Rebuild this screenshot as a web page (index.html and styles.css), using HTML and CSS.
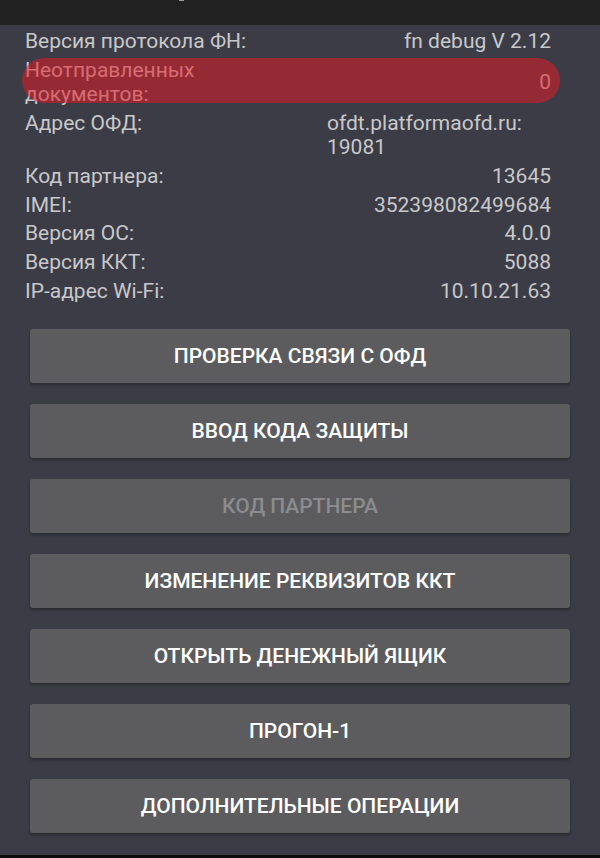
FILE: index.html
```html
<!DOCTYPE html>
<html lang="ru">
<head>
<meta charset="utf-8">
<title>Информация о ККТ</title>
<link rel="stylesheet" href="styles.css">
</head>
<body>
<div class="screen">
  <header class="topbar"><span class="topbar-mark"></span></header>
  <main class="content">
    <section class="info">
      <div class="row">
        <span class="label">Версия протокола ФН:</span>
        <span class="value">fn debug V 2.12</span>
      </div>
      <div class="row row-center">
        <span class="label">Неотправленных документов:</span>
        <span class="value">0</span>
      </div>
      <div class="row">
        <span class="label">Адрес ОФД:</span>
        <span class="value value-start">ofdt.platformaofd.ru: 19081</span>
      </div>
      <div class="row">
        <span class="label">Код партнера:</span>
        <span class="value">13645</span>
      </div>
      <div class="row">
        <span class="label">IMEI:</span>
        <span class="value">352398082499684</span>
      </div>
      <div class="row">
        <span class="label">Версия ОС:</span>
        <span class="value">4.0.0</span>
      </div>
      <div class="row">
        <span class="label">Версия ККТ:</span>
        <span class="value">5088</span>
      </div>
      <div class="row">
        <span class="label">IP-адрес Wi-Fi:</span>
        <span class="value">10.10.21.63</span>
      </div>
      <div class="highlight"></div>
    </section>
    <nav class="actions">
      <button class="btn">Проверка связи с ОФД</button>
      <button class="btn">Ввод кода защиты</button>
      <button class="btn" disabled>Код партнера</button>
      <button class="btn">Изменение реквизитов ККТ</button>
      <button class="btn">Открыть денежный ящик</button>
      <button class="btn">Прогон-1</button>
      <button class="btn">Дополнительные операции</button>
    </nav>
  </main>
  <footer class="bottombar"></footer>
</div>
</body>
</html>
```

FILE: styles.css
```css
* {
  box-sizing: border-box;
}

html, body {
  margin: 0;
  padding: 0;
  background: #0d0d0f;
}

body {
  font-family: Roboto, "Noto Sans", "Liberation Sans", sans-serif;
  width: 600px;
  height: 858px;
  overflow: hidden;
}

.screen {
  display: flex;
  flex-direction: column;
  height: 858px;
}

.topbar {
  height: 25px;
  flex: 0 0 25px;
  background: #212121;
  padding-left: 179px;
}

.topbar-mark {
  display: block;
  width: 5px;
  height: 1px;
  background: #9a9a9a;
}

.content {
  flex: 1 1 auto;
  background: #3c3c46;
  display: flex;
  flex-direction: column;
  padding-top: 4px;
}

.info {
  position: relative;
  display: flex;
  flex-direction: column;
  gap: 4.5px;
  padding: 0 49px 0 25px;
  font-size: 21px;
  line-height: 24.25px;
  color: #c8c8ca;
}

.row {
  display: grid;
  grid-template-columns: 1fr 224px;
  align-items: start;
}

.row-center {
  align-items: center;
}

.label {
  max-width: 260px;
}

.value {
  text-align: right;
}

.value-start {
  text-align: left;
}

.highlight {
  position: absolute;
  left: 22px;
  top: 29px;
  width: 538px;
  height: 45px;
  border-radius: 22.5px;
  background: rgba(228, 26, 38, 0.53);
  pointer-events: none;
}

.actions {
  display: flex;
  flex-direction: column;
  gap: 21px;
  padding: 26px 30px 0;
}

.btn {
  height: 54px;
  border: none;
  border-radius: 3px;
  background: #5c5c5e;
  color: #ffffff;
  font-family: Roboto, "Noto Sans", "Liberation Sans", sans-serif;
  font-weight: 500;
  font-size: 21px;
  text-transform: uppercase;
  box-shadow: 0 2px 3px rgba(0, 0, 0, 0.3);
  padding: 0 12px;
}

.btn:disabled {
  color: #8c8c8e;
}

.bottombar {
  flex: 0 0 3px;
  background: #0d0d0f;
}
```
